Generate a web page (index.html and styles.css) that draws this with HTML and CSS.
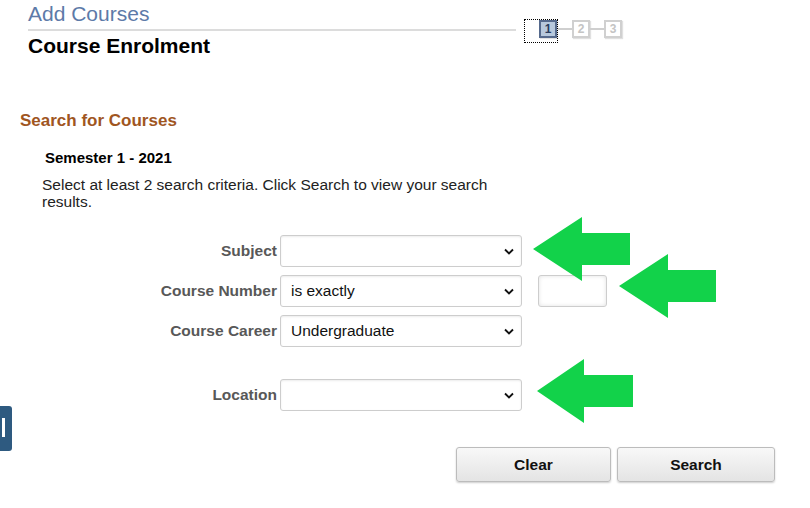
FILE: index.html
```html
<!DOCTYPE html>
<html>
<head>
<meta charset="utf-8">
<link rel="stylesheet" href="styles.css">
</head>
<body>
<div class="page">
  <header class="header">
    <div class="titles">
      <div class="app-title">Add Courses</div>
      <div class="page-title">Course Enrolment</div>
    </div>
    <div class="steps">
      <div class="step-focus"><span class="step current">1</span></div>
      <span class="link"></span>
      <span class="step">2</span>
      <span class="link"></span>
      <span class="step">3</span>
    </div>
  </header>

  <h2 class="section">Search for Courses</h2>
  <div class="term">Semester 1 - 2021</div>
  <p class="intro">Select at least 2 search criteria. Click Search to view your search results.</p>

  <div class="form">
    <label class="lbl">Subject</label>
    <div class="sel"><span></span><svg class="chev" viewBox="0 0 10 6"><path d="M1 1l4 4 4-4" fill="none" stroke="#111" stroke-width="1.8"/></svg></div>
    <div></div>

    <label class="lbl">Course Number</label>
    <div class="sel"><span>is exactly</span><svg class="chev" viewBox="0 0 10 6"><path d="M1 1l4 4 4-4" fill="none" stroke="#111" stroke-width="1.8"/></svg></div>
    <div class="txt"></div>

    <label class="lbl">Course Career</label>
    <div class="sel"><span>Undergraduate</span><svg class="chev" viewBox="0 0 10 6"><path d="M1 1l4 4 4-4" fill="none" stroke="#111" stroke-width="1.8"/></svg></div>
    <div></div>

    <div class="spacer"></div>

    <label class="lbl">Location</label>
    <div class="sel"><span></span><svg class="chev" viewBox="0 0 10 6"><path d="M1 1l4 4 4-4" fill="none" stroke="#111" stroke-width="1.8"/></svg></div>
    <div></div>
  </div>

  <div class="buttons">
    <button class="btn clear">Clear</button>
    <button class="btn search">Search</button>
  </div>

  <div class="side-tab"><span></span></div>

  <svg class="arrow a1" viewBox="0 0 97 64"><polygon points="0,32 49,0 49,16 97,16 97,48 49,48 49,64" fill="#12d24a"/></svg>
  <svg class="arrow a2" viewBox="0 0 97 64"><polygon points="0,32 49,0 49,16 97,16 97,48 49,48 49,64" fill="#12d24a"/></svg>
  <svg class="arrow a3" viewBox="0 0 96 64"><polygon points="0,32 47,0 47,16 96,16 96,48 47,48 47,64" fill="#12d24a"/></svg>
</div>
</body>
</html>
```

FILE: styles.css
```css
* { box-sizing: border-box; }
html, body { margin: 0; padding: 0; background: #fff; }
body { font-family: "Liberation Sans", Arial, sans-serif; color: #000; }
.page { position: relative; width: 810px; height: 508px; overflow: hidden; }

.header { display: flex; padding-left: 28px; padding-top: 2px; }
.titles { width: 488px; }
.app-title {
  font-size: 21px; color: #5d7aa8; line-height: 24px;
  padding-bottom: 3px; border-bottom: 2px solid #dcdcdc;
}
.page-title { font-size: 21px; font-weight: bold; line-height: 24px; padding-top: 3px; }

.steps { display: flex; align-items: flex-start; margin-left: 8px; margin-top: 17px; }
.step-focus {
  width: 34px; height: 24px; border: 1px dotted #000;
  display: flex; justify-content: flex-end; align-items: flex-start;
}
.step {
  width: 18px; height: 18px; border: 2px solid #d0d0d0; background: #fff;
  font-size: 12px; font-weight: bold; color: #c4c4c4;
  display: flex; align-items: center; justify-content: center; line-height: 1;
  margin-top: 1px;
  box-shadow: 1px 1px 1px rgba(0,0,0,0.12);
}
.step-focus .step { margin-top: 0; margin-right: 0; }
.step.current { background: #b7c8dc; border-color: #55698c; color: #2b3d5e; }
.link { width: 14px; height: 2px; background: #cfcfcf; margin-top: 9px; }

.section { margin: 53px 0 0 20px; font-size: 17px; font-weight: bold; color: #a0561f; line-height: 20px; }
.term { margin: 18px 0 0 45px; font-size: 15px; font-weight: bold; line-height: 18px; }
.intro { margin: 9px 0 0 42px; width: 470px; font-size: 15.5px; line-height: 17px; color: #222; }

.form {
  margin: 25px 0 0 0;
  display: grid;
  grid-template-columns: 277px 242px 90px;
  column-gap: 3px;
  row-gap: 8px;
  align-items: center;
}
.lbl { text-align: right; font-size: 15.5px; font-weight: bold; color: #585858; }
.sel {
  height: 32px; border: 1px solid #cdcdcd; border-radius: 3px; background: #fff;
  box-shadow: inset 0 1px 2px rgba(0,0,0,0.08);
  display: flex; align-items: center; justify-content: space-between; padding: 0 7px 0 10px;
  font-size: 15.5px; color: #111;
}
.chev { width: 10px; height: 7px; }
.txt {
  margin-left: 13px; width: 69px; height: 32px; border: 1px solid #cdcdcd; border-radius: 3px;
  box-shadow: inset 0 0 4px rgba(0,0,0,0.12);
}
.spacer { grid-column: 1 / -1; height: 16px; }

.buttons { display: flex; gap: 6px; margin: 36px 0 0 456px; }
.btn {
  height: 35px; border: 1px solid #bcbcbc; border-radius: 3px;
  background: linear-gradient(#f8f8f8, #e4e4e4);
  box-shadow: 0 1px 2px rgba(0,0,0,0.2);
  font-family: "Liberation Sans", Arial, sans-serif; font-size: 15.5px; font-weight: bold; color: #111;
}
.clear { width: 155px; }
.search { width: 158px; }

.side-tab {
  position: absolute; left: 0; top: 406px; width: 12px; height: 45px;
  background: #2e5a80; border-radius: 0 3px 3px 0;
}
.side-tab span { position: absolute; left: 2px; top: 12px; width: 3px; height: 19px; background: #fff; }

.arrow { position: absolute; }
.a1 { left: 533px; top: 217px; width: 97px; height: 64px; }
.a2 { left: 619px; top: 254px; width: 97px; height: 64px; }
.a3 { left: 537px; top: 359px; width: 96px; height: 64px; }
```
